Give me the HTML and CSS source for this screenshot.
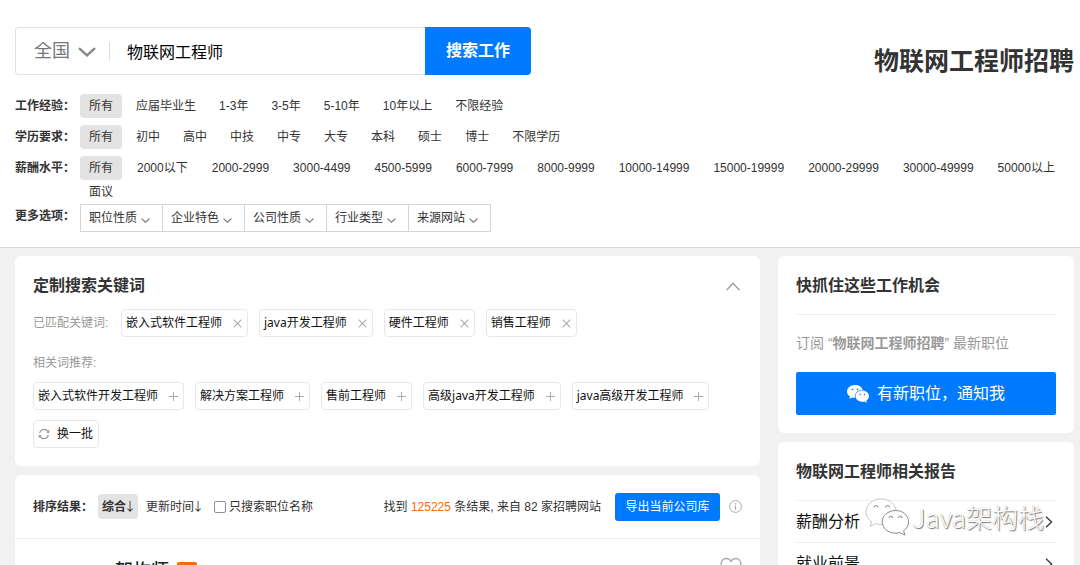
FILE: index.html
```html
<!DOCTYPE html>
<html lang="zh-CN">
<head>
<meta charset="utf-8">
<meta name="viewport" content="width=device-width, initial-scale=1">
<title>物联网工程师招聘</title>
<link rel="stylesheet" href="styles.css">
</head>
<body>
<svg class="sprite" aria-hidden="true">
  <symbol id="down" viewBox="0 0 18 10"><path d="M1 1.2 9 8.4 17 1.2" fill="none" stroke="currentColor" stroke-width="2.4"/></symbol>
  <symbol id="close" viewBox="0 0 9 9"><path d="M.7.7l7.6 7.6M8.3.7.7 8.3" fill="none" stroke="currentColor" stroke-width="1.1"/></symbol>
  <symbol id="plus" viewBox="0 0 9 9"><path d="M4.5 0v9M0 4.5h9" fill="none" stroke="currentColor"/></symbol>
  <symbol id="right" viewBox="0 0 8 12"><path d="M1 .8 6.6 6 1 11.2" fill="none" stroke="currentColor" stroke-width="1.3"/></symbol>
</svg>

<header class="top">
  <div class="top__bar">
    <form class="search">
      <div class="search__box">
        <div class="city">
          <select class="city__select" aria-label="城市"><option>全国</option></select>
          <svg class="city__arrow"><use href="#down"/></svg>
        </div>
        <input class="search__input" type="text" value="物联网工程师" aria-label="职位">
      </div>
      <button class="search__button" type="button">搜索工作</button>
    </form>
    <h1 class="top__title">物联网工程师招聘</h1>
  </div>

  <div class="filter">
    <span class="filter__label">工作经验：</span>
    <nav class="filter__options" aria-label="工作经验">
      <a class="option option--on" href="#">所有</a><a class="option" href="#">应届毕业生</a><a class="option" href="#">1-3年</a><a class="option" href="#">3-5年</a><a class="option" href="#">5-10年</a><a class="option" href="#">10年以上</a><a class="option" href="#">不限经验</a>
    </nav>
  </div>
  <div class="filter">
    <span class="filter__label">学历要求：</span>
    <nav class="filter__options" aria-label="学历要求">
      <a class="option option--on" href="#">所有</a><a class="option" href="#">初中</a><a class="option" href="#">高中</a><a class="option" href="#">中技</a><a class="option" href="#">中专</a><a class="option" href="#">大专</a><a class="option" href="#">本科</a><a class="option" href="#">硕士</a><a class="option" href="#">博士</a><a class="option" href="#">不限学历</a>
    </nav>
  </div>
  <div class="filter filter--salary">
    <span class="filter__label">薪酬水平：</span>
    <nav class="filter__options" aria-label="薪酬水平">
      <a class="option option--on" href="#">所有</a><a class="option" href="#">2000以下</a><a class="option" href="#">2000-2999</a><a class="option" href="#">3000-4499</a><a class="option" href="#">4500-5999</a><a class="option" href="#">6000-7999</a><a class="option" href="#">8000-9999</a><a class="option" href="#">10000-14999</a><a class="option" href="#">15000-19999</a><a class="option" href="#">20000-29999</a><a class="option" href="#">30000-49999</a><a class="option" href="#">50000以上</a><a class="option" href="#">面议</a>
    </nav>
  </div>
  <div class="filter filter--more">
    <span class="filter__label">更多选项：</span>
    <div class="menus">
      <div class="menu"><select class="menu__select" aria-label="职位性质"><option>职位性质</option></select><svg class="menu__arrow"><use href="#down"/></svg></div>
      <div class="menu"><select class="menu__select" aria-label="企业特色"><option>企业特色</option></select><svg class="menu__arrow"><use href="#down"/></svg></div>
      <div class="menu"><select class="menu__select" aria-label="公司性质"><option>公司性质</option></select><svg class="menu__arrow"><use href="#down"/></svg></div>
      <div class="menu"><select class="menu__select" aria-label="行业类型"><option>行业类型</option></select><svg class="menu__arrow"><use href="#down"/></svg></div>
      <div class="menu"><select class="menu__select" aria-label="来源网站"><option>来源网站</option></select><svg class="menu__arrow"><use href="#down"/></svg></div>
    </div>
  </div>
</header>

<div class="page">
  <main class="main">
    <section class="card keywords">
      <div class="keywords__head">
        <h2 class="card__title">定制搜索关键词</h2>
        <button class="fold" type="button" aria-label="收起"><svg viewBox="0 0 14 9"><path d="M.6 8.2 7 1.4l6.4 6.8" fill="none" stroke="currentColor" stroke-width="1.1"/></svg></button>
      </div>
      <div class="tags">
        <span class="tags__label">已匹配关键词:</span>
        <button class="tag" type="button">嵌入式软件工程师<svg class="tag__icon"><use href="#close"/></svg></button>
        <button class="tag" type="button">java开发工程师<svg class="tag__icon"><use href="#close"/></svg></button>
        <button class="tag" type="button">硬件工程师<svg class="tag__icon"><use href="#close"/></svg></button>
        <button class="tag" type="button">销售工程师<svg class="tag__icon"><use href="#close"/></svg></button>
      </div>
      <p class="keywords__hint">相关词推荐:</p>
      <div class="tags">
        <button class="tag" type="button">嵌入式软件开发工程师<svg class="tag__icon"><use href="#plus"/></svg></button>
        <button class="tag" type="button">解决方案工程师<svg class="tag__icon"><use href="#plus"/></svg></button>
        <button class="tag" type="button">售前工程师<svg class="tag__icon"><use href="#plus"/></svg></button>
        <button class="tag" type="button">高级java开发工程师<svg class="tag__icon"><use href="#plus"/></svg></button>
        <button class="tag" type="button">java高级开发工程师<svg class="tag__icon"><use href="#plus"/></svg></button>
      </div>
      <button class="tag tag--swap" type="button"><svg class="tag__swap" viewBox="0 0 12 12"><path d="M1.6 5A4.7 4.7 0 0 1 10 3.4M10.4 7A4.7 4.7 0 0 1 2 8.6" fill="none" stroke="currentColor" stroke-width="1.1"/><path d="M11.3 1.8v3.4L8.2 4.4zM.7 10.2V6.8l3.1.8z" fill="currentColor"/></svg>换一批</button>
    </section>

    <section class="card results">
      <div class="sort">
        <span class="sort__label">排序结果：</span>
        <a class="sort__item sort__item--on" href="#">综合<span class="arrow">↓</span></a>
        <a class="sort__item" href="#">更新时间<span class="arrow">↓</span></a>
        <label class="sort__check"><input class="check" type="checkbox">只搜索职位名称</label>
        <span class="sort__count">找到 <span class="hot">125225</span> 条结果, 来自 82 家招聘网站</span>
        <button class="export" type="button">导出当前公司库</button>
        <svg class="info" viewBox="0 0 13 13"><circle cx="6.5" cy="6.5" r="5.9" fill="none" stroke="currentColor"/><path d="M6.5 3.2v1.3M6.5 5.6v4.2" stroke="currentColor" stroke-width="1.2"/></svg>
      </div>
      <article class="job">
        <h3 class="job__title">架构师</h3>
        <span class="job__badge"></span>
        <button class="job__fav" type="button" aria-label="收藏"><svg viewBox="0 0 22 20"><path d="M11 18.5C6 15 1.200 11.500 1.200 6.700c0-3 2.200-5.200 5-5.200 2 0 3.700 1 4.800 2.800 1.100-1.800 2.800-2.800 4.800-2.800 2.800 0 5 2.200 5 5.200 0 4.800-4.800 8.300-9.800 11.800z" fill="none" stroke="currentColor" stroke-width="1.4"/></svg></button>
      </article>
    </section>
  </main>

  <aside class="side">
    <section class="card">
      <h2 class="card__title">快抓住这些工作机会</h2>
      <p class="subscribe">订阅 “<b>物联网工程师招聘</b>” 最新职位</p>
      <button class="notify" type="button"><svg class="notify__icon" viewBox="0 0 22 18"><path d="M8 0C3.600 0 0 2.900 0 6.500c0 2.100 1.200 3.900 3 5.100L2.400 14l2.800-1.400c.9.200 1.800.4 2.800.4C7.200 8.600 10.500 5 15.700 4.800 14.800 2 11.700 0 8 0z" fill="#fff"/><path d="M15.300 5.500c-3.800 0-6.800 2.500-6.800 5.600 0 3.200 3 5.700 6.800 5.700.8 0 1.600-.1 2.300-.3l2.300 1.200-.6-2c1.600-1.100 2.700-2.700 2.700-4.600 0-3.100-3-5.600-6.700-5.600z" fill="#fff"/><g fill="#007bff"><circle cx="5.400" cy="4.300" r=".9"/><circle cx="10.500" cy="4.300" r=".9"/><circle cx="13.100" cy="9.500" r=".8"/><circle cx="17.500" cy="9.500" r=".8"/></g></svg>有新职位，通知我</button>
    </section>
    <section class="card card--reports">
      <h2 class="card__title">物联网工程师相关报告</h2>
      <ul class="reports">
        <li class="reports__item"><a class="reports__link" href="#">薪酬分析<svg class="reports__arrow"><use href="#right"/></svg></a></li>
        <li class="reports__item"><a class="reports__link" href="#">就业前景<svg class="reports__arrow"><use href="#right"/></svg></a></li>
      </ul>
    </section>
  </aside>
</div>

<div class="watermark">
  <svg class="watermark__logo" viewBox="0 0 44 38"><g fill="#fff" stroke-width="1" stroke-linejoin="round"><path d="M16 1C7.700 1 1 6.700 1 13.700c0 4.200 2.400 7.600 5.700 10L5.200 28.500l5.400-2.800c1.700.5 3.500.8 5.400.8 8.300 0 15-5.700 15-12.800S24.300 1 16 1z" stroke="#c4c4c4"/><path d="M30.500 12.500c-7.400 0-13.300 5-13.300 11.300s5.900 11.400 13.300 11.400c1.600 0 3.100-.2 4.500-.6l4.900 2.500-1.300-4.300c3-2.200 5-5.300 5-9 0-6.300-5.800-11.300-13.100-11.300z" stroke="#888"/></g><g fill="none" stroke="#888"><path d="M9 9.500a2 2 0 0 1 4 0M20.500 9.500a2 2 0 0 1 4 0M24 20a1.800 1.800 0 0 1 3.600 0M33.500 20a1.800 1.800 0 0 1 3.600 0"/></g></svg>
  <span class="watermark__text">Java架构栈</span>
</div>
</body>
</html>
```

FILE: styles.css
```css
* { box-sizing: border-box; }

body {
  margin: 0;
  height: 100vh;
  overflow: hidden;
  position: relative;
  background: #f1f1f1;
  color: #333;
  font: 12px/24px "Liberation Sans", "Noto Sans CJK SC", sans-serif;
}

h1, h2, h3, p, ul { margin: 0; padding: 0; }
a { color: inherit; text-decoration: none; }
button, input, select { font: inherit; color: inherit; margin: 0; }
button { cursor: pointer; }
svg { display: block; flex: none; }
.sprite { display: none; }

/* Search and filters */
.top {
  padding: 27px 6px 15px 15px;
  background: #fff;
  border-bottom: 1px solid #d9d9d9;
}

.top__bar {
  display: flex;
  justify-content: space-between;
  margin-bottom: 15px;
}

.search { display: flex; height: 48px; width: 516px; }

.search__box {
  display: flex;
  align-items: center;
  flex: 1;
  min-width: 0;
  border: 1px solid #e2e2e2;
  border-right: 0;
  border-radius: 4px 0 0 4px;
}

.city { position: relative; width: 94px; border-right: 1px solid #ddd; line-height: 18px; }

.city__select {
  appearance: none;
  display: block;
  width: 100%;
  height: 18px;
  padding: 0 0 0 18px;
  border: 0;
  background: none;
  color: #777;
  font-size: 18px;
  line-height: 18px;
}

.city__arrow {
  position: absolute;
  right: 13px;
  top: 5px;
  width: 18px;
  height: 10px;
  color: #888;
  pointer-events: none;
}

.search__input {
  flex: 1;
  min-width: 0;
  height: 100%;
  padding: 0 17px;
  border: 0;
  background: none;
  color: #000;
  font-size: 16px;
}

.search__button {
  width: 106px;
  padding: 0;
  border: 0;
  border-radius: 0 4px 4px 0;
  background: #007bff;
  color: #fff;
  font-size: 16px;
  font-weight: 700;
}

.top__title { padding-top: 16px; font-size: 25px; line-height: 36px; }

.filter { display: flex; margin-bottom: 7px; }
.filter--salary { margin-bottom: 0; }
.filter--more { margin-bottom: 0; }
.filter__label { flex: none; width: 65px; font-weight: 700; }
.filter__options { display: flex; flex-wrap: wrap; column-gap: 5px; }
.filter--salary .filter__options { column-gap: 6px; }
.option { padding: 0 9px; border-radius: 4px; }
.option--on { background: #e3e3e3; }

.menus { display: flex; border-left: 1px solid #d4d4d4; }

.menu {
  position: relative;
  width: 82px;
  border: 1px solid #d4d4d4;
  border-left: 0;
}

.menu__select {
  appearance: none;
  display: block;
  width: 100%;
  height: 26px;
  padding: 0 0 0 8px;
  border: 0;
  background: none;
}

.menu__arrow {
  position: absolute;
  right: 12px;
  top: 13px;
  width: 9px;
  height: 5px;
  color: #777;
  pointer-events: none;
}

/* Columns */
.page {
  display: flex;
  align-items: flex-start;
  gap: 18px;
  padding: 8px 6px 0 15px;
}

.main { flex: 1; min-width: 0; }
.side { flex: none; width: 296px; }

.card {
  margin-bottom: 9px;
  padding: 18px;
  border-radius: 6px;
  background: #fff;
}

.card__title { font-size: 16px; line-height: 24px; }

/* Keywords */
.keywords__head {
  display: flex;
  align-items: center;
  justify-content: space-between;
  margin-bottom: 11px;
}

.fold { padding: 0; border: 0; background: none; color: #888; margin-right: 2px; }
.fold svg { width: 14px; height: 9px; }

.tags { display: flex; flex-wrap: wrap; align-items: center; gap: 10px 11px; }
.tags__label { width: 77px; color: #999; }
.keywords__hint { margin: 16px 0 9px; color: #999; line-height: 20px; }

.tag {
  display: flex;
  align-items: center;
  height: 28px;
  padding: 0 5px 0 4px;
  border: 1px solid #e8e8e8;
  border-radius: 4px;
  background: #fff;
  color: #111;
  font-family: "Noto Sans", "Noto Sans CJK SC", sans-serif;
  white-space: nowrap;
}

.tag__icon { width: 9px; height: 9px; margin-left: 11px; color: #aaa; }
.tag--swap { margin-top: 10px; }
.tag__swap { width: 12px; height: 12px; margin-right: 7px; color: #999; }

/* Results */
.results { padding: 0; }

.sort {
  display: flex;
  align-items: center;
  height: 64px;
  padding: 0 18px;
  border-bottom: 1px solid #f0f0f0;
  white-space: nowrap;
}

.sort__label { width: 65px; font-weight: 700; }
.sort__item { margin-right: 12px; }

.sort__item--on {
  margin-right: 8px;
  padding: 0 4px;
  border-radius: 4px;
  background: #e3e3e3;
  font-weight: 700;
}

.arrow { font-family: "Noto Sans CJK SC", sans-serif; font-weight: 400; display: inline-block; width: 8px; text-indent: -2px; }
.sort__check { display: flex; align-items: center; gap: 3px; }

.check {
  appearance: none;
  width: 12px;
  height: 12px;
  border: 1px solid #8f8f9d;
  border-radius: 2px;
  background: #fff;
}

.sort__count { margin-left: auto; }
.hot { color: #ff6a00; }

.export {
  width: 105px;
  height: 28px;
  margin: 0 9px 0 14px;
  padding: 0;
  border: 0;
  border-radius: 3px;
  background: #007bff;
  color: #fff;
}

.info { width: 13px; height: 13px; color: #aaa; }

.job {
  display: flex;
  align-items: flex-start;
  gap: 8px;
  padding: 18px 18px 24px 100px;
}

.job__title { color: #222; font-size: 18px; line-height: 28px; font-weight: 500; }
.job__badge { width: 20px; height: 16px; margin-top: 5px; border-radius: 2px; background: #ff6a00; }
.job__fav { margin-left: auto; padding: 0; border: 0; background: none; color: #aaa; }
.job__fav svg { width: 22px; height: 20px; }

/* Sidebar */
.subscribe {
  margin: 16px 0 19px;
  padding-top: 18px;
  border-top: 1px solid #f0f0f0;
  color: #999;
  font-size: 14px;
  line-height: 20px;
}

.notify {
  display: flex;
  align-items: center;
  justify-content: center;
  gap: 8px;
  width: 100%;
  height: 43px;
  border: 0;
  border-radius: 2px;
  background: #007bff;
  color: #fff;
  font-size: 16px;
}

.notify__icon { width: 22px; height: 18px; }
.reports { margin-top: 16px; list-style: none; }
.reports__item { border-top: 1px solid #f0f0f0; }

.reports__link {
  display: flex;
  align-items: center;
  justify-content: space-between;
  height: 41px;
  padding-right: 3px;
  color: #111;
  font-size: 16px;
}

.reports__arrow { width: 8px; height: 12px; color: #333; }

/* Watermark over the page corner */
.watermark {
  position: absolute;
  right: 36px;
  bottom: 29px;
  display: flex;
  align-items: center;
  gap: 3px;
  pointer-events: none;
}

.watermark__logo { width: 44px; height: 38px; }

.watermark__text {
  color: #fff;
  font: 300 26px/38px "Noto Sans CJK SC", sans-serif;
  text-shadow: 1px 1px 1px #777, 0 0 1px #aaa;
}
```
